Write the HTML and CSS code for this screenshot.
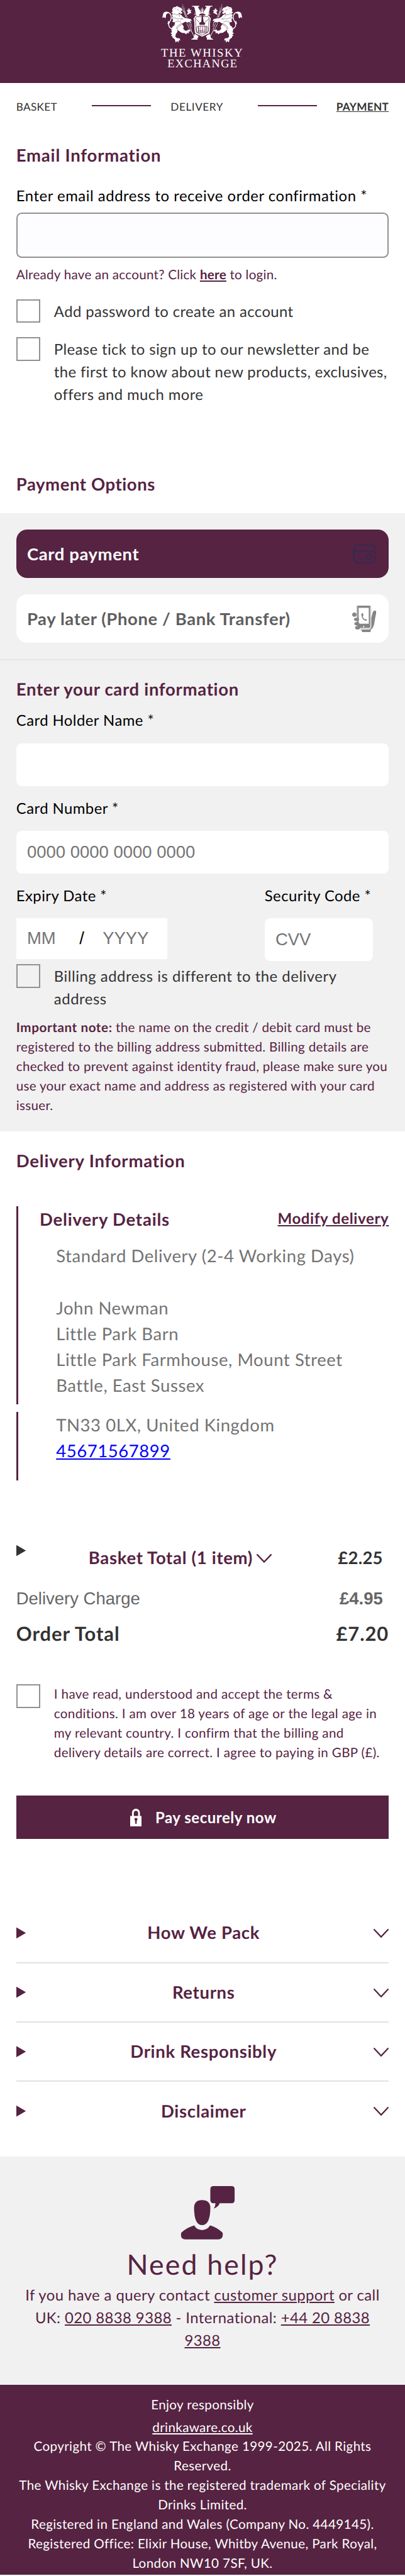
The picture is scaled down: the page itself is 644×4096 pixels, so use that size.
FILE: index.html
```
<!DOCTYPE html>
<html lang="en">
<head>
  <meta charset="UTF-8">
  <meta name="viewport" content="width=device-width, initial-scale=1">
  <title>Payment | The Whisky Exchange</title>
  <link rel="stylesheet" href="styles.css">
</head>
<body>
  <header class="header">
    <svg class="logo" viewBox="0 0 708 570">
      <defs>
        <g id="lion">
          <!-- tail -->
          <path fill="none" stroke="#fff" stroke-width="7" d="M108 224C76 222 66 190 84 164C106 132 96 92 62 87"/>
          <path d="M78 92C62 74 34 80 28 100L21 134L36 128L46 138C56 124 48 112 58 100ZM70 158L68 174L64 182L76 190L82 168Z"/>
          <!-- body -->
          <path d="M103 66L112 46L134 42L144 34L158 44L178 50L188 64L188 76L174 72L180 84L188 86L184 100L168 98L162 90L158 100L178 108L192 124L210 136L236 138L262 146L266 162L252 156L258 174L240 168L232 174L212 166L190 180L170 184L188 188L200 206L196 226L212 240L230 240L234 230L256 238L250 248L238 250L246 262L226 258L222 272L206 260L184 258L162 244L146 232L148 250L134 268L130 290L142 302L166 304L172 324L160 318L156 340L146 326L132 338L126 312L106 298L106 288L94 282L104 272L90 262L102 252L96 234L106 208L122 196L128 172L104 166L112 150L100 136L108 124L100 106L110 98L96 88L108 80Z"/>
          <path d="M240 104L228 108L230 96L238 86L228 78L230 62L240 72L238 54L250 58L250 70L266 68L256 82L264 94L250 96Z"/>
          <g fill="none" stroke="#562342" stroke-width="2.5">
            <path d="M104 106L124 100L142 110L158 104L166 124M108 136L130 134L148 144L164 138L180 150M142 62L160 70M128 166L154 160L178 170"/>
            <path d="M140 228C138 206 156 190 176 188M148 230C148 212 162 200 178 194M186 134L194 150M178 132L184 148M124 54L134 60"/>
          </g>
          <!-- barley -->
          <path fill="none" stroke="#fff" stroke-width="2" d="M190 18L200 66M186 36L202 84M206 46L210 96M198 60L216 130"/>
          <path fill="none" stroke="#fff" stroke-width="5" stroke-dasharray="11 4" d="M196 74L222 132M208 78L230 132M226 180L256 244M244 180L264 232M258 170L264 206"/>
          <path fill="none" stroke="#fff" stroke-width="5" d="M258 232L292 298"/>
          <!-- arms behind the shield -->
          <path d="M268 33H330V39L318 43L342 84L324 110H304L300 96L290 50L284 41L268 38ZM264 315V309L280 303L292 266L324 286L314 306L316 315Z"/>
          <path fill="none" stroke="#fff" stroke-width="4" d="M306 102L290 92M308 108L286 104M342 92L334 70M348 90L344 58"/>
        </g>
      </defs>
      <g fill="#fff">
        <use href="#lion"/>
        <use href="#lion" transform="translate(708 0) scale(-1 1)"/>
        <path d="M351 56L354 44L357 56L358 90H350Z"/>
        <path d="M310 112C320 82 388 82 398 112L410 116L426 140C412 186 426 222 412 262L354 290L296 262C282 222 296 186 282 140L298 116Z"/>
      </g>
      <g fill="none" stroke="#562342" stroke-width="4">
        <path d="M306 124H402L414 142C402 184 414 220 402 254L354 278L306 254C294 220 306 184 294 142Z"/>
        <path fill="#562342" d="M328 112C334 94 374 94 380 112Z"/>
        <path fill="#562342" stroke="none" d="M350 114H364V124H360L366 168L380 178L374 192H334L328 178L346 166Z"/>
        <path d="M298 140L332 172M410 140L376 172"/>
        <rect x="306" y="202" width="96" height="56" rx="20"/>
        <path stroke-width="6" d="M322 206V254M386 206V254"/>
        <path d="M338 204Q332 230 338 256M356 204V256M372 204Q376 230 372 256"/>
        <path stroke-width="3" d="M328 240H348M344 236H368M328 248H380"/>
      </g>
      <g class="logo-text">
        <text x="10" y="455" textLength="688" lengthAdjust="spacingAndGlyphs">THE WHISKY</text>
        <text x="64" y="545" textLength="588" lengthAdjust="spacingAndGlyphs">EXCHANGE</text>
      </g>
    </svg>
  </header>

  <nav class="steps">
    <span class="step step-basket">BASKET</span>
    <span class="step-line"></span>
    <span class="step step-delivery">DELIVERY</span>
    <span class="step-line"></span>
    <span class="step step-payment">PAYMENT</span>
  </nav>

  <section class="email">
    <h2>Email Information</h2>
    <label class="field-label wide" for="email">Enter email address to receive order confirmation *</label>
    <input class="email-input" id="email" type="email">
    <p class="login-note">Already have an account? Click <a href="#">here</a> to login.</p>
    <label class="check">
      <input type="checkbox">
      <span>Add password to create an account</span>
    </label>
    <label class="check">
      <input type="checkbox">
      <span>Please tick to sign up to our newsletter and be the first to know about new products, exclusives, offers and much more</span>
    </label>
  </section>

  <section class="payment">
    <h2>Payment Options</h2>
    <div class="pay-options">
      <button class="pay-option active">
        <span>Card payment</span>
        <svg class="icon-card" viewBox="0 0 66 54" fill="none" stroke="#3c284e" stroke-width="5">
          <rect x="2.5" y="2.5" width="61" height="49" rx="13"/>
          <path d="M3 20.500H63"/>
          <path stroke-width="3.500" stroke-linecap="round" d="M14 31H21M14 41H28"/>
          <ellipse cx="45.500" cy="35.500" rx="7" ry="7"/>
        </svg>
      </button>
      <button class="pay-option">
        <span>Pay later (Phone / Bank Transfer)</span>
        <svg class="icon-phone" viewBox="0 0 67 73" fill="#858585">
          <path fill-rule="evenodd" d="M13 0H50V62H20L13 55ZM18 6V50H46V6Z"/>
          <path fill="none" stroke="#c4c4c4" stroke-width="1.500" d="M14 0V54M52 0V58Q51 64 44 64H22"/>
          <circle cx="32" cy="58" r="2" fill="#fff"/>
          <path d="M25 23L30 20L31 28L29 30Q31 35 35 38L40 37L40 42Q34 43 29 36Q25 30 25 23Z"/>
          <ellipse cx="6" cy="25" rx="6" ry="6"/>
          <ellipse cx="12" cy="38" rx="7" ry="4.500"/>
          <ellipse cx="13" cy="50" rx="7" ry="4.500"/>
          <ellipse cx="15" cy="61" rx="7" ry="5"/>
          <path d="M53 34L57 18Q61 11 66 15Q68 18 65 27L61 50Q59 62 51 67V73H27V69L22 66H46Q53 65 53 58Z"/>
        </svg>
      </button>
    </div>
    <div class="card-form">
      <h3>Enter your card information</h3>
      <label class="field-label" for="holder">Card Holder Name *</label>
      <input class="field" id="holder" type="text">
      <label class="field-label" for="number">Card Number *</label>
      <input class="field" id="number" type="text" placeholder="0000 0000 0000 0000">
      <div class="field-row">
        <div class="expiry">
          <label class="field-label" for="month">Expiry Date *</label>
          <div class="expiry-box">
            <input id="month" type="text" placeholder="MM">
            <span>/</span>
            <input type="text" placeholder="YYYY">
          </div>
        </div>
        <div class="cvv">
          <label class="field-label" for="cvv">Security Code *</label>
          <input class="field" id="cvv" type="text" placeholder="CVV">
        </div>
      </div>
      <label class="check billing">
        <input type="checkbox">
        <span>Billing address is different to the delivery address</span>
      </label>
      <p class="important"><b>Important note:</b> the name on the credit / debit card must be registered to the billing address submitted. Billing details are checked to prevent against identity fraud, please make sure you use your exact name and address as registered with your card issuer.</p>
    </div>
  </section>

  <section class="delivery">
    <h2>Delivery Information</h2>
    <div class="delivery-block">
      <div class="delivery-head">
        <h3>Delivery Details</h3>
        <a href="#">Modify delivery</a>
      </div>
      <div class="address">
        Standard Delivery (2-4 Working Days)<br><br>
        John Newman<br>
        Little Park Barn<br>
        Little Park Farmhouse, Mount Street<br>
        Battle, East Sussex
      </div>
    </div>
    <div class="delivery-block second">
      <div class="address">
        TN33 0LX, United Kingdom<br>
        <a href="#">45671567899</a>
      </div>
    </div>
  </section>

  <section class="totals">
    <div class="total-row basket">
      <i class="triangle"></i>
      <span class="basket-title">Basket Total (1 item)</span>
      <svg class="chevron" viewBox="0 0 42 25"><path d="M2 2L21 22L40 2"/></svg>
      <span class="price">£2.25</span>
    </div>
    <div class="total-row charge">
      <span>Delivery Charge</span>
      <b>£4.95</b>
    </div>
    <div class="total-row order">
      <span>Order Total</span>
      <span>£7.20</span>
    </div>
    <label class="check terms">
      <input type="checkbox">
      <span>I have read, understood and accept the terms &amp; conditions. I am over 18 years of age or the legal age in my relevant country. I confirm that the billing and delivery details are correct. I agree to paying in GBP (£).</span>
    </label>
    <button class="pay-now">
      <svg class="icon-lock" viewBox="0 0 32 49">
        <path fill="#fff" fill-rule="evenodd" d="M0 20H5V12C5 -4 27 -4 27 12V20H32V49H0ZM10 20H22V12C22 3.500 10 3.500 10 12ZM14 33V41Q16 43.500 18 41V33A4.200 4.200 0 1 0 14 33Z"/>
      </svg>
      <span>Pay securely now</span>
    </button>
  </section>

  <section class="faq">
    <div class="faq-item">
      <i class="triangle"></i>
      <span>How We Pack</span>
      <svg class="chevron" viewBox="0 0 42 25"><path d="M2 2L21 22L40 2"/></svg>
    </div>
    <div class="faq-item">
      <i class="triangle"></i>
      <span>Returns</span>
      <svg class="chevron" viewBox="0 0 42 25"><path d="M2 2L21 22L40 2"/></svg>
    </div>
    <div class="faq-item">
      <i class="triangle"></i>
      <span>Drink Responsibly</span>
      <svg class="chevron" viewBox="0 0 42 25"><path d="M2 2L21 22L40 2"/></svg>
    </div>
    <div class="faq-item">
      <i class="triangle"></i>
      <span>Disclaimer</span>
      <svg class="chevron" viewBox="0 0 42 25"><path d="M2 2L21 22L40 2"/></svg>
    </div>
  </section>

  <section class="help">
    <svg class="icon-help" viewBox="0 0 208 206" fill="#562342">
      <path d="M126 0H196Q208 0 208 12V54Q208 66 196 66H150Q146 80 127 87Q134 78 134 66H126Q114 66 114 54V12Q114 0 126 0Z"/>
      <path d="M82 54Q112 54 114 82Q114 151 82 151Q51 151 51 82Q53 54 82 54Z"/>
      <path d="M52 152Q60 169 82 170Q103 169 113 152Q138 159 160 179Q163 184 162 190Q161 205 146 206H16Q1 205 0 190Q-1 184 3 179Q24 160 52 152Z"/>
    </svg>
    <h2>Need help?</h2>
    <p>If you have a query contact <a href="#">customer support</a> or call UK: <a href="#">020 8838 9388</a> - International: <a href="#">+44 20 8838 9388</a></p>
  </section>

  <footer class="footer">
    <p class="enjoy">Enjoy responsibly</p>
    <p><a href="#">drinkaware.co.uk</a></p>
    <p>Copyright © The Whisky Exchange 1999-2025. All Rights Reserved.</p>
    <p>The Whisky Exchange is the registered trademark of Speciality Drinks Limited.</p>
    <p>Registered in England and Wales (Company No. 4449145).</p>
    <p>Registered Office: Elixir House, Whitby Avenue, Park Royal, London NW10 7SF, UK.</p>
  </footer>
</body>
</html>
```
FILE: styles.css
```
* {
  box-sizing: border-box;
}
/* 1rem = 10 units of the mobile layout */
html {
  font-size: 17.175px;
}
body {
  margin: 0;
  font-family: Lato, "Open Sans", sans-serif;
  font-size: 1.39rem;
  line-height: 2.1rem;
  color: #333;
  background-color: #fff;
  overflow-x: hidden;
  text-rendering: geometricPrecision;
}
h2, h3, p {
  margin: 0;
}
h2, h3 {
  font-size: 1.6rem;
  line-height: 2.4rem;
  font-weight: 700;
  letter-spacing: 0.047rem;
  color: #562342;
}
a {
  color: inherit;
}
input, button {
  font-family: "Liberation Sans", Arial, sans-serif;
  font-size: 1.6rem;
  border: none;
  margin: 0;
  padding: 0;
}
input::placeholder {
  color: #757575;
  opacity: 1;
}
section {
  padding: 0 1.5rem;
}

.header {
  height: 7.7rem;
  background-color: #562342;
}
.logo {
  display: block;
  width: 7.87rem;
  margin: 0 auto;
  padding-top: 0.17rem;
  overflow: visible;
}
.logo-text {
  fill: #fff;
  font-family: "Liberation Serif", serif;
  font-size: 98px;
  letter-spacing: 8px;
}

.steps {
  display: flex;
  padding: 1.47rem 1.5rem 0;
}
.step {
  font-size: 1rem;
  line-height: 1.5rem;
  letter-spacing: 0.02rem;
}
.step-basket {
  width: 7rem;
}
.step-delivery {
  width: 9.87rem;
  padding-left: 1.8rem;
  letter-spacing: 0.033rem;
}
.step-payment {
  margin-left: auto;
  font-weight: 700;
  text-decoration: underline;
}
.step-line {
  width: 5.5rem;
  height: 2px;
  margin-top: 0.53rem;
  background-color: #562342;
}

.email h2 {
  margin-top: 2.51rem;
}
.field-label {
  display: block;
  color: #000;
  letter-spacing: 0.027rem;
}
.field-label.wide {
  margin-top: 1.53rem;
  letter-spacing: 0.032rem;
}
.email-input {
  display: block;
  width: 100%;
  height: 4.2rem;
  margin-top: 0.49rem;
  border: 2px solid #919191;
  border-radius: 0.5rem;
  background-color: #fdfdff;
}
.login-note {
  margin-top: 0.69rem;
  font-size: 1.2rem;
  line-height: 1.8rem;
  letter-spacing: 0.0155rem;
  color: #562342;
}
.login-note a {
  font-weight: 700;
}
.check {
  display: flex;
  margin-top: 1.31rem;
  letter-spacing: 0.023rem;
}
.check input {
  appearance: none;
  flex: none;
  width: 2.2rem;
  height: 2.2rem;
  margin-right: 1.3rem;
  border: 2px solid #919191;
}
.check span {
  padding-top: 0.12rem;
}

.payment {
  padding: 0;
}
.payment h2 {
  margin-top: 5.95rem;
  padding: 0 1.5rem 1.53rem;
  letter-spacing: 0.034rem;
}
.pay-options {
  display: flex;
  flex-direction: column;
  gap: 1.5rem;
  padding: 1.5rem;
  background-color: #f1f1f1;
  border-bottom: 2px solid #e6e6e6;
}
.pay-option {
  display: flex;
  justify-content: space-between;
  align-items: center;
  height: 4.5rem;
  padding: 0 1.16rem 0 1rem;
  border-radius: 1rem;
  background-color: #fff;
  color: #5e5e5e;
  font-family: Lato, sans-serif;
  font-weight: 700;
  line-height: 2.4rem;
  letter-spacing: 0.035rem;
}
.pay-option.active {
  background-color: #562342;
  color: #fff;
}
.icon-card {
  width: 2.2rem;
  height: 1.8rem;
}
.icon-phone {
  width: 2.24rem;
  height: 2.44rem;
}
.card-form {
  padding: 1.45rem 1.5rem 1.49rem;
  background-color: #f1f1f1;
}
.card-form h3 {
  margin-bottom: 0.72rem;
  letter-spacing: 0.041rem;
}
.field {
  display: block;
  width: 100%;
  height: 4rem;
  margin: 0.99rem 0 1.01rem;
  padding: 0 1rem;
  border-radius: 0.5rem;
  background-color: #fff;
}
.field-row {
  display: flex;
  justify-content: space-between;
}
.cvv {
  width: 11.5rem;
}
.cvv .field {
  width: 10rem;
  margin-bottom: 0;
}
.expiry-box {
  display: flex;
  align-items: center;
  width: 14rem;
  height: 3.8rem;
  margin-top: 0.99rem;
  padding-left: 1rem;
  background-color: #fff;
  color: #000;
}
.expiry-box input {
  width: 4.85rem;
  background: none;
}
.expiry-box span {
  width: 2.15rem;
  font-family: "Liberation Sans", Arial, sans-serif;
  font-size: 1.6rem;
}
.billing {
  margin-top: 0.29rem;
  letter-spacing: 0.031rem;
}
.billing span {
  padding-top: 0.09rem;
}
.important {
  margin: 0.69rem -0.4rem 0 0;
  font-size: 1.2rem;
  line-height: 1.8rem;
  letter-spacing: 0.0175rem;
  color: #562342;
}
.important b {
  letter-spacing: 0.035rem;
}

.delivery h2 {
  padding-top: 1.53rem;
  margin-bottom: 3.01rem;
}
.delivery-block {
  height: 18.3rem;
  padding-left: 2rem;
  border-left: 3px solid #562342;
}
.delivery-block.second {
  height: 6.33rem;
  margin-top: 0.73rem;
}
.delivery-head {
  display: flex;
  justify-content: space-between;
  margin-bottom: 0.98rem;
}
.delivery-head a {
  margin-top: 0.08rem;
  font-size: 1.4rem;
  font-weight: 700;
  letter-spacing: 0.035rem;
  color: #562342;
}
.address {
  padding-left: 1.52rem;
  font-size: 1.6rem;
  line-height: 2.4rem;
  letter-spacing: 0.034rem;
  color: #737373;
}
.address a {
  color: #00f;
}

.totals {
  padding-top: 5.98rem;
}
.triangle {
  flex: none;
  width: 0.9rem;
  height: 1.05rem;
  background-color: currentColor;
  clip-path: polygon(0 0, 100% 50%, 0 100%);
}
.chevron {
  flex: none;
  width: 1.4rem;
  fill: none;
  stroke: #562342;
  stroke-width: 4;
  stroke-linecap: round;
}
.total-row {
  display: flex;
  justify-content: space-between;
  font-size: 1.6rem;
  line-height: 2.4rem;
}
.basket {
  justify-content: flex-start;
  font-weight: 700;
}
.basket-title {
  margin-left: 5.8rem;
  letter-spacing: 0.04rem;
  color: #562342;
}
.basket .chevron {
  align-self: center;
  margin: 0.1rem 0 0 0.35rem;
}
.basket .price {
  margin: 0 0.55rem 0 auto;
  letter-spacing: 0.015rem;
}
.charge {
  margin-top: 1.37rem;
  padding-right: 0.55rem;
  font-family: "Liberation Sans", Arial, sans-serif;
  color: #666;
}
.order {
  margin-top: 0.68rem;
  font-size: 1.8rem;
  line-height: 2.7rem;
  font-weight: 700;
  letter-spacing: 0.055rem;
}
.terms {
  margin-top: 3.37rem;
  padding-right: 0.3rem;
  font-size: 1.2rem;
  line-height: 1.8rem;
  letter-spacing: 0.02rem;
  color: #562342;
}
.terms span {
  padding-top: 0.06rem;
}
.pay-now {
  display: flex;
  justify-content: center;
  align-items: center;
  gap: 1.27rem;
  width: 100%;
  height: 4rem;
  margin-top: 3.05rem;
  padding-left: 0.15rem;
  background-color: #562342;
  color: #fff;
  font-family: Lato, sans-serif;
  font-size: 1.4rem;
  font-weight: 700;
  letter-spacing: 0.03rem;
}
.icon-lock {
  width: 1.07rem;
}

.faq {
  padding-top: 6rem;
  padding-bottom: 1.38rem;
}
.faq-item {
  display: flex;
  height: 5.5rem;
  padding-top: 1.47rem;
  border-bottom: 2px solid #e2e2e2;
  color: #562342;
  font-size: 1.6rem;
  font-weight: 700;
  line-height: 2.4rem;
  letter-spacing: 0.04rem;
}
.faq-item:last-child {
  border-bottom: none;
}
.faq-item span {
  flex: 1;
  padding-left: 0.7rem;
  text-align: center;
}
.faq-item .triangle {
  margin-top: 0.7rem;
}
.faq-item .chevron {
  height: 0.85rem;
  margin-top: 0.86rem;
}

.help {
  padding-top: 2.78rem;
  padding-bottom: 3rem;
  background-color: #f1f1f1;
  color: #562342;
  text-align: center;
}
.icon-help {
  display: block;
  width: 4.98rem;
  margin: 0 auto 0.5rem;
  transform: translateX(0.5rem);
}
.help h2 {
  font-size: 2.6rem;
  line-height: 3.6rem;
  font-weight: 400;
  letter-spacing: 0.125rem;
}
.help p {
  margin-top: 0.03rem;
  letter-spacing: 0.0245rem;
}

.footer {
  padding: 0.99rem 1.5rem 0.1rem;
  background-color: #562342;
  color: #fff;
  font-size: 1.2rem;
  line-height: 1.8rem;
  letter-spacing: 0.022rem;
  text-align: center;
}
.enjoy {
  margin-bottom: 0.29rem;
}
```
